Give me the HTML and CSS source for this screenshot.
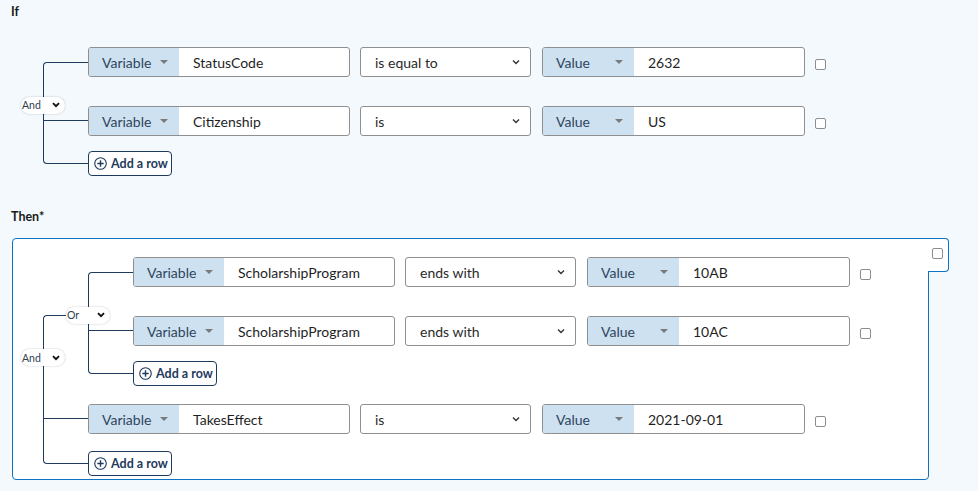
FILE: index.html
```html
<!DOCTYPE html>
<html>
<head>
<meta charset="utf-8">
<link rel="stylesheet" href="styles.css">
</head>
<body>
<div class="page">
  <div class="label">If</div>
  <div class="group g-if">
    <span class="bracket"></span>
    <span class="pill"><span>And</span><svg class="pchev" viewBox="0 0 8 6" width="8" height="6"><path d="M1 1.2 L4 4.2 L7 1.2" fill="none" stroke="#111" stroke-width="1.9"/></svg></span>
    <div class="row">
      <div class="field"><span class="type">Variable<i class="tri"></i></span><span class="val">StatusCode</span></div>
      <div class="select">is equal to<svg viewBox="0 0 8 6" width="8" height="6"><path d="M1 1.5 L4 4.5 L7 1.5" fill="none" stroke="#333" stroke-width="1.4"/></svg></div>
      <div class="field f-value"><span class="type">Value<i class="tri"></i></span><span class="val">2632</span></div>
      <span class="cb"></span>
    </div>
    <div class="row">
      <div class="field"><span class="type">Variable<i class="tri"></i></span><span class="val">Citizenship</span></div>
      <div class="select">is<svg viewBox="0 0 8 6" width="8" height="6"><path d="M1 1.5 L4 4.5 L7 1.5" fill="none" stroke="#333" stroke-width="1.4"/></svg></div>
      <div class="field f-value"><span class="type">Value<i class="tri"></i></span><span class="val">US</span></div>
      <span class="cb"></span>
    </div>
    <button class="add"><svg viewBox="0 0 14 14" width="13" height="13"><circle cx="7" cy="7" r="6.2" fill="none" stroke="#1e3a5c" stroke-width="1.2"/><path d="M7 3.6 V10.4 M3.6 7 H10.4" stroke="#1e3a5c" stroke-width="1.5"/></svg>Add a row</button>
  </div>

  <div class="label then-label">Then*</div>
  <div class="then-box">
    <div class="tab"><span class="cb"></span></div>
    <div class="group g-and">
      <span class="bracket b-deep"></span>
      <span class="pill p-and"><span>And</span><svg class="pchev" viewBox="0 0 8 6" width="8" height="6"><path d="M1 1.2 L4 4.2 L7 1.2" fill="none" stroke="#111" stroke-width="1.9"/></svg></span>
      <div class="group g-or">
        <span class="bracket"></span>
        <span class="pill"><span>Or</span><svg class="pchev" viewBox="0 0 8 6" width="8" height="6"><path d="M1 1.2 L4 4.2 L7 1.2" fill="none" stroke="#111" stroke-width="1.9"/></svg></span>
        <div class="row">
          <div class="field"><span class="type">Variable<i class="tri"></i></span><span class="val">ScholarshipProgram</span></div>
          <div class="select">ends with<svg viewBox="0 0 8 6" width="8" height="6"><path d="M1 1.5 L4 4.5 L7 1.5" fill="none" stroke="#333" stroke-width="1.4"/></svg></div>
          <div class="field f-value"><span class="type">Value<i class="tri"></i></span><span class="val">10AB</span></div>
          <span class="cb"></span>
        </div>
        <div class="row">
          <div class="field"><span class="type">Variable<i class="tri"></i></span><span class="val">ScholarshipProgram</span></div>
          <div class="select">ends with<svg viewBox="0 0 8 6" width="8" height="6"><path d="M1 1.5 L4 4.5 L7 1.5" fill="none" stroke="#333" stroke-width="1.4"/></svg></div>
          <div class="field f-value"><span class="type">Value<i class="tri"></i></span><span class="val">10AC</span></div>
          <span class="cb"></span>
        </div>
        <button class="add"><svg viewBox="0 0 14 14" width="13" height="13"><circle cx="7" cy="7" r="6.2" fill="none" stroke="#1e3a5c" stroke-width="1.2"/><path d="M7 3.6 V10.4 M3.6 7 H10.4" stroke="#1e3a5c" stroke-width="1.5"/></svg>Add a row</button>
      </div>
      <div class="row r-after-group">
        <div class="field"><span class="type">Variable<i class="tri"></i></span><span class="val">TakesEffect</span></div>
        <div class="select">is<svg viewBox="0 0 8 6" width="8" height="6"><path d="M1 1.5 L4 4.5 L7 1.5" fill="none" stroke="#333" stroke-width="1.4"/></svg></div>
        <div class="field f-value"><span class="type">Value<i class="tri"></i></span><span class="val">2021-09-01</span></div>
        <span class="cb"></span>
      </div>
      <button class="add add-last"><svg viewBox="0 0 14 14" width="13" height="13"><circle cx="7" cy="7" r="6.2" fill="none" stroke="#1e3a5c" stroke-width="1.2"/><path d="M7 3.6 V10.4 M3.6 7 H10.4" stroke="#1e3a5c" stroke-width="1.5"/></svg>Add a row</button>
    </div>
  </div>
</div>
</body>
</html>
```

FILE: styles.css
```css
* { box-sizing: border-box; }
html, body { margin: 0; padding: 0; }
body {
  background: #f3f9fc;
  font-family: Lato, "Open Sans", sans-serif;
  color: #1f1f1f;
  width: 978px;
  height: 491px;
  overflow: hidden;
}
.page { padding: 4px 0 0 11px; }
.label {
  font-size: 12.5px;
  font-weight: 700;
  line-height: 16px;
  color: #1a1a1a;
}
.then-label { margin-top: 33px; }

.group {
  position: relative;
  padding-left: 45px;
  display: flex;
  flex-direction: column;
  align-items: flex-start;
}
.g-if { margin-left: 32px; margin-top: 27px; }

.bracket {
  position: absolute;
  left: 0;
  top: 15px;
  bottom: 12px;
  width: 45px;
  border: 1px solid #1e3a5c;
  border-right: none;
  border-radius: 4px 0 0 4px;
}
.bracket.b-deep { top: 58px; }

.pill {
  position: absolute;
  left: -22px;
  top: calc(50% - 15px);
  width: 44px;
  height: 17px;
  border-radius: 9px;
  background: #fff;
  box-shadow: 0 0 2px rgba(0,0,0,0.25);
  display: flex;
  align-items: center;
  justify-content: space-between;
  padding: 0 5px 0 1px;
  font-size: 10.5px;
  color: #2c3e50;
  z-index: 2;
}
.pill.p-and { top: 92px; }

.row {
  position: relative;
  display: flex;
  align-items: center;
  height: 30px;
}
.row + .row { margin-top: 29px; }
.row.r-after-group { margin-top: 18px; }
.row::before {
  content: "";
  position: absolute;
  left: -45px;
  top: 14px;
  width: 45px;
  border-top: 1px solid #1e3a5c;
}
.g-if > .row:nth-child(3)::before,
.g-or > .row:nth-child(3)::before { content: none; }

.field {
  display: flex;
  width: 262px;
  height: 30px;
  border: 1px solid #8f8f8f;
  border-radius: 3px;
  overflow: hidden;
  background: #fff;
  font-size: 14px;
}
.field.f-value { width: 263px; margin-left: 11px; }
.type {
  width: 90px;
  flex: none;
  background: #cde1f0;
  color: #2f4560;
  display: flex;
  align-items: center;
  justify-content: space-between;
  padding: 0 11px 0 13px;
}
.f-value .type { width: 91px; }
.tri {
  width: 0;
  height: 0;
  border-left: 4px solid transparent;
  border-right: 4px solid transparent;
  border-top: 4px solid #7a7a7a;
}
.val {
  display: flex;
  align-items: center;
  padding-left: 14px;
  color: #1f1f1f;
}
.select {
  margin-left: 10px;
  width: 171px;
  height: 30px;
  border: 1px solid #8f8f8f;
  border-radius: 3px;
  background: #fff;
  display: flex;
  align-items: center;
  justify-content: space-between;
  padding: 0 10px 0 14px;
  font-size: 14px;
  color: #2a2a2a;
}
.cb {
  display: inline-block;
  width: 11px;
  height: 11px;
  border: 1px solid #8d8d8d;
  border-radius: 2px;
  background: #fff;
  margin-left: 10px;
  margin-top: 4px;
}

.add {
  position: relative;
  margin-top: 15px;
  width: 84px;
  height: 25px;
  border: 1px solid #1e3a5c;
  border-radius: 4px;
  background: #fff;
  display: flex;
  align-items: center;
  gap: 4px;
  padding: 0 0 0 5px;
  font-family: Lato, "Open Sans", sans-serif;
  font-weight: 700;
  font-size: 12.5px;
  color: #1e3a5c;
}
.add.add-last { margin-top: 17px; }

.then-box {
  position: relative;
  margin-left: 1px;
  margin-top: 13px;
  width: 917px;
  height: 242px;
  background: #fff;
  border: 1px solid #1172c2;
  border-radius: 4px 0 4px 4px;
  padding: 18px 0 0 30px;
}
.tab {
  position: absolute;
  top: -1px;
  left: 100%;
  width: 21px;
  height: 34px;
  background: #fff;
  border: 1px solid #1172c2;
  border-left: none;
  border-radius: 0 4px 4px 0;
  padding: 9px 0 0 4px;
}
.tab .cb { margin: 0; display: block; }
```
